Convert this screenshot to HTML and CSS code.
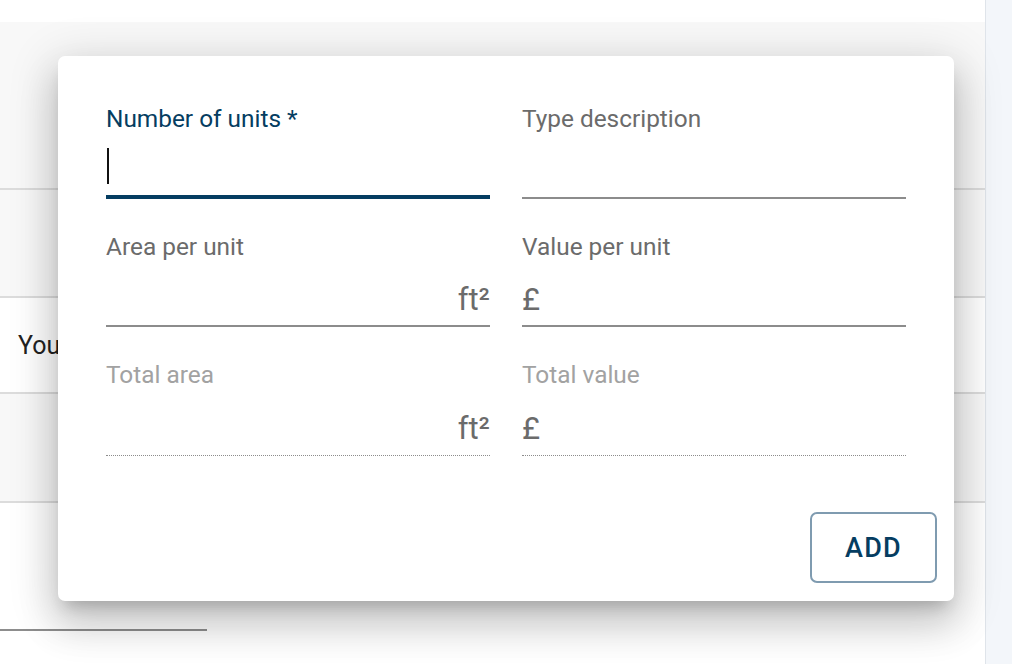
FILE: index.html
```html
<!DOCTYPE html>
<html>
<head>
<meta charset="utf-8">
<link rel="stylesheet" href="styles.css">
</head>
<body>
<div class="page">
  <main class="main">
    <div class="topbar"></div>
    <div class="row row-a"></div>
    <div class="row row-b"></div>
    <div class="row row-c"><span class="row-text">You</span></div>
    <div class="row row-d"></div>
    <div class="row row-e"><div class="bg-input"></div></div>
  </main>
  <aside class="side"></aside>

  <div class="dialog">
    <div class="fields">
      <div class="field focused">
        <div class="label">Number of units *</div>
        <div class="control"><span class="caret"></span></div>
      </div>
      <div class="field">
        <div class="label">Type description</div>
        <div class="control"></div>
      </div>
      <div class="field">
        <div class="label">Area per unit</div>
        <div class="control"><span class="spacer"></span><span class="suffix">ft²</span></div>
      </div>
      <div class="field">
        <div class="label">Value per unit</div>
        <div class="control"><span class="prefix">£</span></div>
      </div>
      <div class="field disabled">
        <div class="label">Total area</div>
        <div class="control"><span class="spacer"></span><span class="suffix">ft²</span></div>
      </div>
      <div class="field disabled">
        <div class="label">Total value</div>
        <div class="control"><span class="prefix">£</span></div>
      </div>
    </div>
    <div class="actions">
      <button class="btn-add">ADD</button>
    </div>
  </div>
</div>
</body>
</html>
```

FILE: styles.css
```css
html, body {
  margin: 0;
  padding: 0;
}
body {
  width: 1012px;
  height: 664px;
  overflow: hidden;
  background: #ffffff;
  font-family: Roboto, "Liberation Sans", Arial, sans-serif;
}
.page {
  position: relative;
  display: flex;
  width: 1012px;
  height: 664px;
}
.main {
  flex: 1;
  display: flex;
  flex-direction: column;
}
.topbar {
  height: 22px;
  background: #ffffff;
}
.row {
  border-bottom: 2px solid #dcdcdc;
  display: flex;
  align-items: center;
}
.row-a { height: 166px; background: #f8f8f8; }
.row-b { height: 106px; background: #f8f8f8; }
.row-c { height: 94px; background: #ffffff; }
.row-d { height: 107px; background: #f8f8f8; }
.row-e {
  flex: 1;
  border-bottom: none;
  background: #ffffff;
  align-items: flex-start;
}
.row-text {
  padding-left: 18px;
  font-size: 25px;
  color: #222222;
}
.bg-input {
  margin-top: 126px;
  width: 207px;
  height: 2px;
  background: #8d8d8d;
}
.side {
  width: 26px;
  background: #f3f6fa;
  border-left: 1px solid #dfe4ea;
}

.dialog {
  position: absolute;
  left: 58px;
  top: 56px;
  width: 896px;
  height: 545px;
  box-sizing: border-box;
  background: #ffffff;
  border-radius: 7px;
  box-shadow: 0 11px 15px -7px rgba(0,0,0,0.2), 0 24px 38px 3px rgba(0,0,0,0.14), 0 9px 46px 8px rgba(0,0,0,0.12);
  padding: 49px 17px 18px 48px;
  display: flex;
  flex-direction: column;
}
.fields {
  display: grid;
  grid-template-columns: 384px 384px;
  column-gap: 32px;
  row-gap: 34px;
}
.field {
  display: flex;
  flex-direction: column;
}
.label {
  font-size: 24.4px;
  line-height: 28px;
  color: #6b6b6b;
}
.control {
  height: 66px;
  box-sizing: border-box;
  border-bottom: 2px solid #8c8c8c;
  display: flex;
  align-items: flex-end;
  padding-bottom: 12px;
  font-size: 31px;
  line-height: 36px;
  color: #6b6b6b;
}
.field.focused .label {
  color: #053d61;
}
.field.focused .control {
  border-bottom-color: #053d61;
  box-shadow: inset 0 -2px 0 #053d61;
}
.caret {
  display: block;
  width: 2px;
  height: 36px;
  margin-left: 1px;
  margin-bottom: 1px;
  background: #111111;
}
.spacer { flex: 1; }
.suffix, .prefix {
  display: block;
  margin-bottom: -5px;
}
.field.disabled .label {
  color: #a2a2a2;
}
.field.disabled .control {
  border-bottom: 1px dotted #8c8c8c;
  height: 67px;
  padding-bottom: 13px;
}
.actions {
  margin-top: auto;
  display: flex;
  justify-content: flex-end;
}
.btn-add {
  width: 127px;
  height: 71px;
  box-sizing: border-box;
  border: 2px solid #7f9bb0;
  border-radius: 7px;
  background: #ffffff;
  color: #053d61;
  font-family: Roboto, "Liberation Sans", Arial, sans-serif;
  font-size: 27px;
  font-weight: 500;
  letter-spacing: 1.3px;
  padding: 0;
}
```
